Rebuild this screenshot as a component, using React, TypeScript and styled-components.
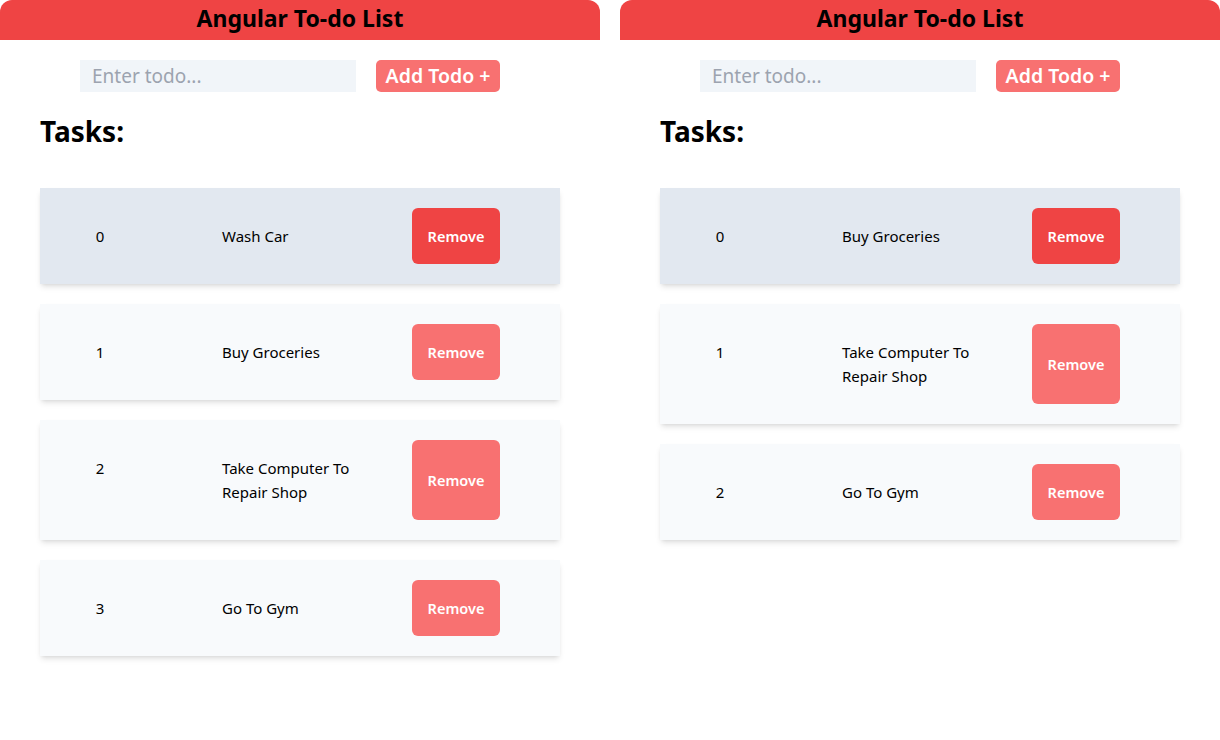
import React from "react";
import styled, { createGlobalStyle } from "styled-components";

const Global = createGlobalStyle`
  html, body { margin: 0; padding: 0; background: #ffffff; }
  body { font-family: "Noto Sans", "Open Sans", sans-serif; color: #000; }
  * { box-sizing: border-box; }
`;

const Page = styled.div`
  display: grid;
  grid-template-columns: 600px 600px;
  column-gap: 20px;
  width: 1220px;
  height: 740px;
`;

const Panel = styled.section`
  display: flex;
  flex-direction: column;
  height: 740px;
  border-radius: 12px;
  overflow: hidden;
  background: #ffffff;
`;

const Header = styled.header`
  height: 40px;
  padding-bottom: 5px;
  background: #ef4444;
  display: flex;
  align-items: center;
  justify-content: center;
  font-size: 23px;
  font-weight: 700;
  color: #000;
`;

const Form = styled.form`
  display: flex;
  gap: 20px;
  margin: 20px 0 0 80px;
`;

const Input = styled.input`
  width: 276px;
  height: 32px;
  border: none;
  outline: none;
  background: #f1f5f9;
  padding: 0 12px;
  font-family: inherit;
  font-size: 19px;
  color: #111;
  &::placeholder { color: #9ca3af; }
`;

const AddButton = styled.button`
  width: 124px;
  height: 32px;
  border: none;
  border-radius: 5px;
  background: #f87171;
  color: #fff;
  font-family: inherit;
  font-size: 19.5px;
  font-weight: 600;
  padding: 0 0 2px;
  cursor: pointer;
`;

const Title = styled.h2`
  margin: 21px 0 0 40px;
  font-size: 28px;
  line-height: 36px;
  font-weight: 700;
`;

const List = styled.ul`
  list-style: none;
  margin: 39px 0 0 40px;
  padding: 0;
  width: 520px;
  display: flex;
  flex-direction: column;
  gap: 20px;
`;

const Card = styled.li<{ $active?: boolean }>`
  display: grid;
  grid-template-columns: 122px 170px 88px;
  column-gap: 20px;
  align-items: stretch;
  padding: 20px 60px 20px 40px;
  background: ${(p) => (p.$active ? "#e2e8f0" : "#f8fafc")};
  box-shadow: 0 4px 6px -1px rgba(0, 0, 0, 0.1), 0 2px 4px -2px rgba(0, 0, 0, 0.1);
  font-size: 15px;
  line-height: 24px;
`;

const Index = styled.span`
  width: 40px;
  padding: 16px 0;
  text-align: center;
  align-self: start;
`;

const Text = styled.span`
  padding: 16px 0;
  align-self: center;
`;

const RemoveButton = styled.button<{ $active?: boolean }>`
  border: none;
  border-radius: 6px;
  background: ${(p) => (p.$active ? "#ef4444" : "#f87171")};
  color: #fff;
  font-family: inherit;
  font-size: 14.5px;
  font-weight: 600;
  padding: 0;
  cursor: pointer;
`;

type Props = { todos: string[] };

const TodoPanel = ({ todos }: Props) => (
  <Panel>
    <Header>Angular To-do List</Header>
    <Form onSubmit={(e) => e.preventDefault()}>
      <Input placeholder="Enter todo..." />
      <AddButton type="submit">Add Todo +</AddButton>
    </Form>
    <Title>Tasks:</Title>
    <List>
      {todos.map((t, i) => (
        <Card key={t} $active={i === 0}>
          <Index>{i}</Index>
          <Text>{t}</Text>
          <RemoveButton $active={i === 0}>Remove</RemoveButton>
        </Card>
      ))}
    </List>
  </Panel>
);

export default function App() {
  return (
    <>
      <Global />
      <Page>
        <TodoPanel todos={["Wash Car", "Buy Groceries", "Take Computer To Repair Shop", "Go To Gym"]} />
        <TodoPanel todos={["Buy Groceries", "Take Computer To Repair Shop", "Go To Gym"]} />
      </Page>
    </>
  );
}
